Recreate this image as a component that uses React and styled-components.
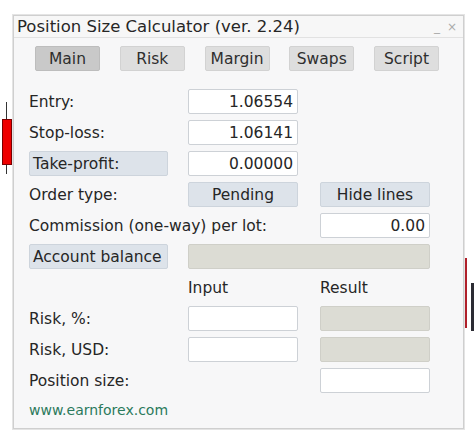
import React from 'react'
import styled, { createGlobalStyle } from 'styled-components'

const GlobalStyle = createGlobalStyle`
    html, body {
        margin: 0;
        padding: 0;
        background: #ffffff;
    }
    body {
        font-family: "DejaVu Sans", sans-serif;
        color: #262626;
    }
`

const Stage = styled.div`
    position: relative;
    width: 474px;
    height: 443px;
    padding: 15px 0 0 13px;
    box-sizing: border-box;
    overflow: hidden;
`

// chart candles peeking out behind the panel
const Candle = styled.div`
    position: absolute;
    left: ${(p) => p.x}px;
    top: ${(p) => p.y}px;
    width: ${(p) => p.w}px;
    height: ${(p) => p.h}px;
    background: ${(p) => p.color};
    border: ${(p) => (p.border ? `1px solid ${p.border}` : 'none')};
    box-sizing: border-box;
`

const Panel = styled.div`
    width: 451px;
    height: 414px;
    box-sizing: border-box;
    border: 1px solid #cfcfcf;
    box-shadow: 0 0 0 1px #e4e4e4;
    background: #f7f7f8;
    position: relative;
    display: flex;
    flex-direction: column;
`

const TitleBar = styled.div`
    height: 21px;
    display: flex;
    align-items: center;
    justify-content: space-between;
    padding: 0 6px 0 3px;
    border-bottom: 1px solid #e2e2e2;
    background: #f7f7f7;
`

const Title = styled.div`
    font-size: 16.5px;
    color: #262626;
    white-space: nowrap;
`

const WindowControls = styled.div`
    display: flex;
    align-items: center;
    gap: 7px;
    font-size: 12px;
    color: #ababab;
`

const Body = styled.div`
    padding: 8px 33px 0 15px;
    display: flex;
    flex-direction: column;
`

const Tabs = styled.div`
    margin-left: 6px;
    width: 404px;
    display: flex;
    justify-content: space-between;
    margin-bottom: 18px;
`

const Tab = styled.div`
    width: 65px;
    height: 25px;
    box-sizing: border-box;
    border: 1px solid ${(p) => (p.active ? '#bdbdbd' : '#d2d2d2')};
    border-radius: 2px;
    background: ${(p) => (p.active ? '#c9c9c9' : '#dedede')};
    display: flex;
    align-items: center;
    justify-content: center;
    font-size: 15.5px;
    color: #2e2e2e;
`

const Grid = styled.div`
    display: grid;
    grid-template-columns: 137px 110px 110px;
    column-gap: 22px;
    row-gap: 6px;
    grid-auto-rows: 25px;
`

const Label = styled.div`
    grid-column: ${(p) => p.span || 'auto'};
    display: flex;
    align-items: center;
    font-size: 15.5px;
    white-space: nowrap;
    color: #262626;
`

const Field = styled.div`
    grid-column: ${(p) => p.span || 'auto'};
    box-sizing: border-box;
    border: 1px solid ${(p) => (p.disabled ? '#cfcfc8' : '#cdd1d6')};
    border-radius: 2px;
    background: ${(p) => (p.disabled ? '#dcdcd4' : '#ffffff')};
    display: flex;
    align-items: center;
    justify-content: flex-end;
    padding: 0 4px;
    font-size: 15.5px;
    color: #262626;
`

const Button = styled.div`
    grid-column: ${(p) => p.span || 'auto'};
    width: ${(p) => p.width || 'auto'};
    box-sizing: border-box;
    border: 1px solid #cdd4dc;
    border-radius: 2px;
    background: #dde3ea;
    display: flex;
    align-items: center;
    justify-content: ${(p) => (p.left ? 'flex-start' : 'center')};
    padding: 0 3px;
    font-size: 15.5px;
    color: #262626;
    white-space: nowrap;
`

const Header = styled.div`
    display: flex;
    align-items: center;
    font-size: 15.5px;
    color: #262626;
`

const Spacer = styled.div``

const Site = styled.div`
    margin-top: 9px;
    font-size: 14px;
    color: #2b7a5c;
`

const tabs = ['Main', 'Risk', 'Margin', 'Swaps', 'Script']

export default function App() {
    return (
        <>
            <GlobalStyle />
            <Stage>
                <Candle x={6} y={102} w={1} h={72} color="#333" />
                <Candle x={2} y={119} w={10} h={46} color="#ee0000" border="#7a0000" />
                <Candle x={464} y={258} w={3} h={70} color="#b0202a" />
                <Candle x={471} y={283} w={3} h={48} color="#2c2c34" />
                <Panel>
                    <TitleBar>
                        <Title>Position Size Calculator (ver. 2.24)</Title>
                        <WindowControls>
                            <span>_</span>
                            <span>×</span>
                        </WindowControls>
                    </TitleBar>
                    <Body>
                        <Tabs>
                            {tabs.map((t) => (
                                <Tab key={t} active={t === 'Main'}>
                                    {t}
                                </Tab>
                            ))}
                        </Tabs>
                        <Grid>
                            <Label>Entry:</Label>
                            <Field>1.06554</Field>
                            <Spacer />

                            <Label>Stop-loss:</Label>
                            <Field>1.06141</Field>
                            <Spacer />

                            <Button left width="139px">Take-profit:</Button>
                            <Field>0.00000</Field>
                            <Spacer />

                            <Label>Order type:</Label>
                            <Button>Pending</Button>
                            <Button>Hide lines</Button>

                            <Label span="1 / 3">Commission (one-way) per lot:</Label>
                            <Field>0.00</Field>

                            <Button left width="139px">Account balance</Button>
                            <Field span="2 / 4" disabled />

                            <Spacer />
                            <Header>Input</Header>
                            <Header>Result</Header>

                            <Label>Risk, %:</Label>
                            <Field />
                            <Field disabled />

                            <Label>Risk, USD:</Label>
                            <Field />
                            <Field disabled />

                            <Label>Position size:</Label>
                            <Spacer />
                            <Field />
                        </Grid>
                        <Site>www.earnforex.com</Site>
                    </Body>
                </Panel>
            </Stage>
        </>
    )
}
